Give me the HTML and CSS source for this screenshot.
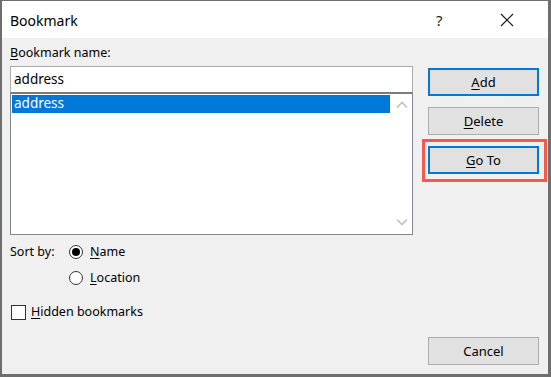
FILE: index.html
```html
<!DOCTYPE html>
<html>
	<head>
		<meta charset="utf-8" />
		<title>Bookmark</title>
		<link rel="stylesheet" href="styles.css">
	</head>
	<body>
		<div class="window">
			<div class="titlebar">
				<span class="title">Bookmark</span>
				<span class="help">?</span>
				<span class="close">
					<svg width="14" height="14" viewBox="0 0 14 14">
						<path d="M1 1 L13 13 M13 1 L1 13" stroke="#1a1a1a" stroke-width="1.2" fill="none" />
					</svg>
				</span>
			</div>
			<div class="main">
				<div class="left">
					<div class="label"><u>B</u>ookmark name:</div>
					<div class="input">address</div>
					<div class="listbox">
						<div class="items">
							<div class="item selected">address</div>
						</div>
						<div class="scrollbar">
							<svg width="12" height="8" viewBox="0 0 12 8">
								<path d="M1 6.5 L6 1.5 L11 6.5" stroke="#c2c2c2" stroke-width="1.6" fill="none" />
							</svg>
							<svg width="12" height="8" viewBox="0 0 12 8">
								<path d="M1 1.5 L6 6.5 L11 1.5" stroke="#c2c2c2" stroke-width="1.6" fill="none" />
							</svg>
						</div>
					</div>
					<div class="sort">
						<span class="sort-label">Sort by:</span>
						<div class="radios">
							<div class="radio-row"><span class="radio on"></span><span><u>N</u>ame</span></div>
							<div class="radio-row"><span class="radio"></span><span><u>L</u>ocation</span></div>
						</div>
					</div>
					<div class="check-row"><span class="checkbox"></span><span><u>H</u>idden bookmarks</span></div>
				</div>
				<div class="right">
					<div class="buttons">
						<div class="button default"><u>A</u>dd</div>
						<div class="button"><u>D</u>elete</div>
						<div class="button default"><u>G</u>o To</div>
					</div>
					<div class="button">Cancel</div>
				</div>
			</div>
			<div class="highlight"></div>
		</div>
	</body>
</html>
```

FILE: styles.css
```css
* {
	margin: 0;
	padding: 0;
	box-sizing: border-box;
}

body {
	font-family: "Noto Sans", "Liberation Sans", sans-serif;
	font-size: 12.5px;
	color: #000;
	background: #fff;
}

u {
	text-decoration: underline;
	text-underline-offset: 2px;
}

.window {
	position: relative;
	width: 551px;
	height: 377px;
	border: 1px solid #6e6e6e;
	border-left-width: 2px;
	border-right-width: 3px;
	border-bottom-width: 3px;
	display: flex;
	flex-direction: column;
	background: #f0f0f0;
}

.titlebar {
	height: 37px;
	background: #fff;
	display: flex;
	align-items: center;
	padding-left: 8px;
	flex-shrink: 0;
}

.title {
	font-size: 14px;
	flex: 1;
	padding-top: 2px;
}

.help {
	font-size: 15px;
	width: 20px;
	margin-right: 42px;
	color: #222;
	padding-top: 1px;
}

.close {
	width: 50px;
	height: 20px;
	display: flex;
	align-items: center;
	padding-left: 2px;
}

.main {
	flex: 1;
	display: flex;
	padding: 7px 9px 9px 8px;
}

.left {
	width: 403px;
	display: flex;
	flex-direction: column;
}

.label {
	height: 16px;
	line-height: 16px;
	margin-bottom: 5px;
}

.input {
	height: 27px;
	border: 1px solid #acacac;
	border-bottom-color: #7a7a7a;
	background: #fff;
	font-size: 13.5px;
	line-height: 24px;
	padding-left: 3px;
}

.listbox {
	height: 142px;
	border: 1px solid #828790;
	border-top-color: #7a7a7a;
	background: #fff;
	display: flex;
	padding: 1px;
}

.items {
	flex: 1;
}

.item {
	height: 18px;
	line-height: 17px;
	font-size: 13.5px;
	padding-left: 2px;
}

.selected {
	background: #0078d7;
	color: #fff;
}

.scrollbar {
	width: 18px;
	margin-left: 3px;
	display: flex;
	flex-direction: column;
	justify-content: space-between;
	align-items: center;
	padding: 6px 0 7px;
}

.sort {
	display: flex;
	margin-top: 8px;
}

.sort-label {
	width: 59px;
	line-height: 18px;
}

.radios {
	display: flex;
	flex-direction: column;
	gap: 8px;
}

.radio-row,
.check-row {
	display: flex;
	align-items: center;
	height: 18px;
	line-height: 18px;
}

.radio {
	width: 14px;
	height: 14px;
	border: 1px solid #333;
	border-radius: 50%;
	background: #fff;
	margin-right: 7px;
	display: flex;
	align-items: center;
	justify-content: center;
}

.radio.on::after {
	content: "";
	width: 8px;
	height: 8px;
	border-radius: 50%;
	background: #000;
}

.check-row {
	margin-top: 16px;
	margin-left: 1px;
}

.checkbox {
	width: 15px;
	height: 15px;
	border: 1px solid #333;
	background: #fff;
	margin-right: 5px;
}

.right {
	margin-left: 15px;
	width: 111px;
	padding-top: 23px;
	display: flex;
	flex-direction: column;
	justify-content: space-between;
}

.buttons {
	display: flex;
	flex-direction: column;
	gap: 11px;
}

.button {
	height: 28px;
	border: 1px solid #adadad;
	background: #e1e1e1;
	display: flex;
	align-items: center;
	justify-content: center;
	font-size: 13px;
}

.button.default {
	border: 2px solid #0078d7;
}

.highlight {
	position: absolute;
	left: 420px;
	top: 138px;
	width: 125px;
	height: 43px;
	border: 3px solid #f25a4b;
}
```
